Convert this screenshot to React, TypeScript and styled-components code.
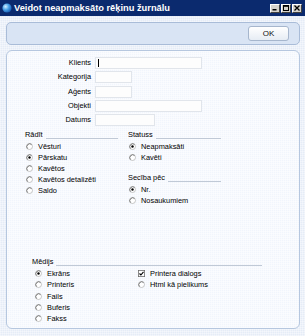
import React from 'react';
import styled, { createGlobalStyle } from 'styled-components';

const Global = createGlobalStyle`
  html, body { margin: 0; padding: 0; }
  body {
    width: 305px; height: 336px; overflow: hidden;
    font-family: "Liberation Sans", Arial, sans-serif;
    color: #000;
  }
  #root { height: 336px; }
`;

const Window = styled.div`
  width: 305px;
  height: 336px;
  box-sizing: border-box;
  display: flex;
  flex-direction: column;
  background-color: #e5ecf7;
  background-image:
    repeating-linear-gradient(0deg, rgba(255,255,255,0.35) 0 1px, transparent 1px 2px),
    repeating-linear-gradient(90deg, rgba(255,255,255,0.35) 0 1px, transparent 1px 2px);
`;

const TitleBar = styled.div`
  height: 16px;
  flex: none;
  display: flex;
  align-items: center;
  padding: 0 3px 0 2px;
  background: #0b2a6e;
`;

const TitleText = styled.span`
  color: #fff;
  font-weight: bold;
  font-size: 9.3px;
  margin-left: 2px;
  white-space: nowrap;
`;

const Controls = styled.div`
  margin-left: auto;
  display: flex;
  gap: 1px;
`;

const CtrlButton = styled.div`
  width: 10px;
  height: 9px;
  box-sizing: border-box;
  background: #d6d3cc;
  border: 1px solid;
  border-color: #fff #404040 #404040 #fff;
  display: flex;
  align-items: center;
  justify-content: center;
`;

const Body = styled.div`
  flex: 1;
  display: flex;
  flex-direction: column;
  padding: 6px 5px 7px 6px;
  min-height: 0;
`;

const TopPanel = styled.div`
  height: 23px;
  flex: none;
  box-sizing: border-box;
  border: 1px solid #a9bcd8;
  border-radius: 5px;
  background: #d9e4f4;
  display: flex;
  align-items: center;
  justify-content: flex-end;
  padding-right: 10px;
`;

const OkButton = styled.button`
  width: 41px;
  height: 15px;
  box-sizing: border-box;
  border: 1px solid #a6b6cd;
  border-radius: 3px;
  background: linear-gradient(#ffffff, #e6ecf4);
  font-family: inherit;
  font-size: 8px;
  color: #111;
  padding: 0;
`;

const MainPanel = styled.div`
  flex: 1;
  margin-top: 5px;
  box-sizing: border-box;
  border: 1px solid #b6c7df;
  border-radius: 6px;
  background-color: #f1f5fc;
  background-image:
    repeating-linear-gradient(0deg, rgba(255,255,255,0.5) 0 1px, transparent 1px 2px),
    repeating-linear-gradient(90deg, rgba(255,255,255,0.5) 0 1px, transparent 1px 2px);
  padding-top: 6px;
  display: flex;
  flex-direction: column;
`;

const Fields = styled.div`
  display: grid;
  grid-template-columns: 84px max-content;
  column-gap: 4px;
  row-gap: 2.25px;
  grid-auto-rows: 12px;
`;

const Label = styled.span`
  font-size: 7.4px;
  line-height: 12px;
  text-align: right;
`;

const Input = styled.div<{ $w: number }>`
  width: ${p => p.$w}px;
  height: 12px;
  box-sizing: border-box;
  background: #fdfdfd;
  border: 1px solid #e1e5eb;
  position: relative;
`;

const Caret = styled.span`
  position: absolute;
  left: 2px;
  top: 1px;
  width: 1px;
  height: 8px;
  background: #000;
`;

const Options = styled.div`
  display: flex;
  gap: 10px;
  padding-left: 18px;
  margin-top: 4px;
`;

const Group = styled.div<{ $w: number }>`
  width: ${p => p.$w}px;
  display: flex;
  flex-direction: column;
`;

const Header = styled.div<{ $mt?: number }>`
  height: 10px;
  display: flex;
  margin-top: ${p => p.$mt ?? 0}px;
  margin-bottom: 1px;
`;

const HeaderText = styled.span`
  font-size: 7.4px;
  line-height: 10px;
  white-space: nowrap;
`;

const Rule = styled.div`
  flex: 1;
  height: 0;
  margin-top: 8px;
  margin-left: 3px;
  border-top: 1px solid #c0c9d6;
`;

const Item = styled.div<{ $indent: number; $h?: number }>`
  height: ${p => p.$h ?? 11}px;
  display: flex;
  align-items: center;
  padding-left: ${p => p.$indent}px;
`;

const ItemText = styled.span`
  font-size: 7.4px;
  margin-left: 5px;
  white-space: nowrap;
`;

const Media = styled.div`
  margin-top: 51px;
  margin-left: 25px;
  width: 230px;
  display: flex;
  flex-direction: column;
`;

const MediaCols = styled.div`
  display: grid;
  grid-template-columns: 103px 1fr;
`;

const Col = styled.div`
  display: flex;
  flex-direction: column;
`;

const Radio = ({ checked }: { checked?: boolean }) => (
  <svg width="7" height="7" viewBox="0 0 14 14" style={{ flex: 'none' }}>
    <circle cx="7" cy="7" r="6" fill="#fff" stroke="#b4b4b4" strokeWidth="1.5" />
    <path d="M2.8 11.2 A6 6 0 0 1 11.2 2.8" fill="none" stroke="#666" strokeWidth="1.6" />
    {checked && <circle cx="7" cy="7" r="2.4" fill="#000" />}
  </svg>
);

const Check = ({ checked }: { checked?: boolean }) => (
  <svg width="7" height="7" viewBox="0 0 14 14" style={{ flex: 'none' }}>
    <rect x="0.75" y="0.75" width="12.5" height="12.5" fill="#fff" stroke="#666" strokeWidth="1.5" />
    {checked && <path d="M3 7 L5.8 10 L11 3.6" fill="none" stroke="#000" strokeWidth="2.2" />}
  </svg>
);

const RadioItem = ({ label, checked, indent, h }: { label: string; checked?: boolean; indent: number; h?: number }) => (
  <Item $indent={indent} $h={h}>
    <Radio checked={checked} />
    <ItemText>{label}</ItemText>
  </Item>
);

const SectionHeader = ({ title, mt }: { title: string; mt?: number }) => (
  <Header $mt={mt}>
    <HeaderText>{title}</HeaderText>
    <Rule />
  </Header>
);

export default function App() {
  const fields: [string, number][] = [
    ['Klients', 107],
    ['Kategorija', 37],
    ['Aģents', 37],
    ['Objekti', 107],
    ['Datums', 60],
  ];
  return (
    <>
      <Global />
      <Window>
        <TitleBar>
          <svg width="10" height="10" viewBox="0 0 10 10">
            <defs>
              <radialGradient id="g" cx="0.35" cy="0.35" r="0.7">
                <stop offset="0" stopColor="#d6f0ff" />
                <stop offset="0.5" stopColor="#4aa3e8" />
                <stop offset="1" stopColor="#1659b0" />
              </radialGradient>
            </defs>
            <circle cx="5" cy="5" r="4.6" fill="url(#g)" />
          </svg>
          <TitleText>Veidot neapmaksāto rēķinu žurnālu</TitleText>
          <Controls>
            <CtrlButton>
              <svg width="6" height="6" viewBox="0 0 6 6"><rect x="0.5" y="4" width="4" height="1.5" fill="#000" /></svg>
            </CtrlButton>
            <CtrlButton>
              <svg width="6" height="6" viewBox="0 0 6 6"><rect x="0.5" y="0.5" width="5" height="5" fill="none" stroke="#000" strokeWidth="1" /><rect x="0.5" y="0.5" width="5" height="1.3" fill="#000" /></svg>
            </CtrlButton>
            <CtrlButton>
              <svg width="6" height="6" viewBox="0 0 6 6"><path d="M0.5 0.5 L5.5 5.5 M5.5 0.5 L0.5 5.5" stroke="#000" strokeWidth="1.3" /></svg>
            </CtrlButton>
          </Controls>
        </TitleBar>
        <Body>
          <TopPanel>
            <OkButton>OK</OkButton>
          </TopPanel>
          <MainPanel>
            <Fields>
              {fields.map(([l, w], i) => (
                <React.Fragment key={l}>
                  <Label>{l}</Label>
                  <Input $w={w}>{i === 0 && <Caret />}</Input>
                </React.Fragment>
              ))}
            </Fields>
            <Options>
              <Group $w={93}>
                <SectionHeader title="Rādīt" />
                <RadioItem indent={1} label="Vēsturi" />
                <RadioItem indent={1} label="Pārskatu" checked />
                <RadioItem indent={1} label="Kavētos" />
                <RadioItem indent={1} label="Kavētos detalizēti" />
                <RadioItem indent={1} label="Saldo" />
              </Group>
              <Group $w={93}>
                <SectionHeader title="Statuss" />
                <RadioItem indent={1} label="Neapmaksāti" checked />
                <RadioItem indent={1} label="Kavēti" />
                <SectionHeader title="Secība pēc" mt={10} />
                <RadioItem indent={1} label="Nr." checked />
                <RadioItem indent={1} label="Nosaukumiem" />
              </Group>
            </Options>
            <Media>
              <SectionHeader title="Mēdijs" />
              <MediaCols>
                <Col>
                  <RadioItem indent={3} h={11.25} label="Ekrāns" checked />
                  <RadioItem indent={3} h={11.25} label="Printeris" />
                  <RadioItem indent={3} h={11.25} label="Fails" />
                  <RadioItem indent={3} h={11.25} label="Buferis" />
                  <RadioItem indent={3} h={11.25} label="Fakss" />
                </Col>
                <Col>
                  <Item $indent={3} $h={11.25}>
                    <Check checked />
                    <ItemText>Printera dialogs</ItemText>
                  </Item>
                  <RadioItem indent={3} h={11.25} label="Html kā pielikums" />
                </Col>
              </MediaCols>
            </Media>
          </MainPanel>
        </Body>
      </Window>
    </>
  );
}
